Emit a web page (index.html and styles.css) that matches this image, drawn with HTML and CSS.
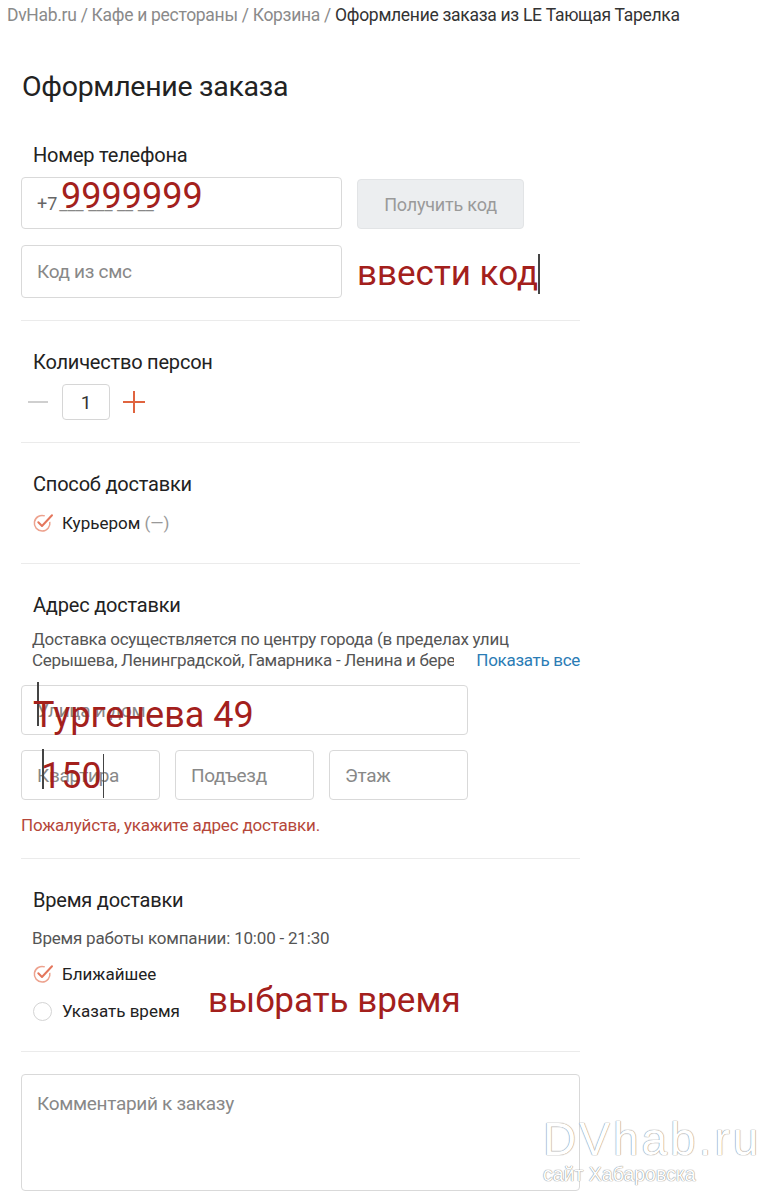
FILE: index.html
```html
<!DOCTYPE html>
<html lang="ru">
<head>
    <meta charset="UTF-8">
    <meta name="viewport" content="width=device-width, initial-scale=1.0">
    <title>Оформление заказа</title>
    <link rel="stylesheet" href="styles.css">
</head>
<body>
    <div class="crumbs">
        <a href="#">DvHab.ru</a> / <a href="#">Кафе и рестораны</a> / <a href="#">Корзина</a> / <span class="current">Оформление заказа из LE Тающая Тарелка</span>
    </div>

    <h1 class="page-title">Оформление заказа</h1>

    <form class="order">
        <!-- Phone -->
        <div class="block">
            <div class="label">Номер телефона</div>
            <div class="row">
                <div class="field phone-field">
                    <span class="prefix">+7</span>
                    <span class="mask">___ ___ __ __</span>
                    <span class="note note-phone">9999999</span>
                </div>
                <button type="button" class="get-code">Получить код</button>
            </div>
            <div class="row">
                <div class="field code-field"><span class="ph">Код из смс</span></div>
                <span class="note note-code">ввести код<i class="caret"></i></span>
            </div>
        </div>

        <!-- Persons -->
        <div class="block">
            <div class="label">Количество персон</div>
            <div class="stepper">
                <span class="minus"></span>
                <span class="count">1</span>
                <span class="plus"></span>
            </div>
        </div>

        <!-- Delivery type -->
        <div class="block block-opts">
            <div class="label label-opt">Способ доставки</div>
            <div class="option">
                <svg class="check" viewBox="0 0 22 22" width="22" height="22">
                    <path d="M17.8 9.8 A7.8 7.8 0 1 1 12.8 3.9" fill="none" stroke="#eda28e" stroke-width="1.5"/>
                    <path d="M6.3 10.3 L10 14 L20 3.3" fill="none" stroke="#e4765c" stroke-width="2" stroke-linecap="round" stroke-linejoin="round"/>
                </svg>
                <span>Курьером <span class="muted">(—)</span></span>
            </div>
        </div>

        <!-- Address -->
        <div class="block">
            <div class="label label-hint">Адрес доставки</div>
            <div class="hint">
                <div class="hint-text">Доставка осуществляется по центру города (в пределах улиц Серышева, Ленинградской, Гамарника - Ленина и берега Амура)</div>
                <a href="#" class="show-all">Показать все</a>
            </div>
            <div class="addr">
                <div class="field street"><span class="ph">Улица и дом</span>
                    <i class="caret caret-street"></i>
                    <span class="note note-street">Тургенева 49</span>
                </div>
                <div class="addr-row">
                    <div class="field"><span class="ph">Квартира</span>
                        <i class="caret caret-flat"></i>
                        <span class="note note-flat">150<i class="caret"></i></span>
                    </div>
                    <div class="field"><span class="ph">Подъезд</span></div>
                    <div class="field"><span class="ph">Этаж</span></div>
                </div>
            </div>
            <div class="error">Пожалуйста, укажите адрес доставки.</div>
        </div>

        <!-- Time -->
        <div class="block block-opts">
            <div class="label label-hint">Время доставки</div>
            <div class="hours">Время работы компании: 10:00 - 21:30</div>
            <div class="time-opts">
                <div class="option">
                    <svg class="check" viewBox="0 0 22 22" width="22" height="22">
                        <path d="M17.8 9.8 A7.8 7.8 0 1 1 12.8 3.9" fill="none" stroke="#eda28e" stroke-width="1.5"/>
                        <path d="M6.3 10.3 L10 14 L20 3.3" fill="none" stroke="#e4765c" stroke-width="2" stroke-linecap="round" stroke-linejoin="round"/>
                    </svg>
                    <span>Ближайшее</span>
                </div>
                <div class="option">
                    <span class="radio"></span>
                    <span>Указать время</span>
                </div>
                <span class="note note-time">выбрать время</span>
            </div>
        </div>

        <div class="comment"><span class="ph">Комментарий к заказу</span></div>
    </form>

    <div class="watermark">
        <div class="wm-big">DVhab.ru</div>
        <div class="wm-small">сайт Хабаровска</div>
    </div>
</body>
</html>
```

FILE: styles.css
```css
body {
    font-family: Roboto, "Liberation Sans", sans-serif;
    background-color: #ffffff;
    color: #222;
    margin: 0;
    padding: 0;
    width: 757px;
    height: 1200px;
    overflow: hidden;
    position: relative;
}
.crumbs {
    padding: 5px 0 0 7px;
    font-size: 17.5px;
    line-height: 20px;
    color: #8a8a8a;
    letter-spacing: -0.3px;
    white-space: nowrap;
}
.crumbs a {
    color: #8a8a8a;
    text-decoration: none;
}
.crumbs .current {
    color: #333;
}
.page-title {
    margin: 45px 0 0 22px;
    font-size: 28.5px;
    line-height: 34px;
    font-weight: 400;
    color: #222;
    letter-spacing: -0.3px;
}
.order {
    margin: 39px 0 0 21px;
    width: 559px;
}
.block {
    border-bottom: 1px solid #ebebeb;
    padding: 29px 0 22px;
}
.block:first-child {
    padding-top: 0;
}
.block-opts {
    padding-bottom: 29px;
}
.label {
    font-size: 20px;
    line-height: 24px;
    color: #222;
    padding-left: 12px;
    margin-bottom: 10px;
    letter-spacing: -0.2px;
}
.label-opt {
    margin-bottom: 16px;
}
.label-hint {
    margin-bottom: 12px;
}
.row {
    display: flex;
    align-items: center;
    gap: 15px;
    margin-bottom: 16px;
}
.row:last-child {
    margin-bottom: 0;
}
.field {
    position: relative;
    box-sizing: border-box;
    height: 52px;
    border: 1px solid #d9d9d9;
    border-radius: 4px;
    display: flex;
    align-items: center;
    padding-left: 15px;
    font-size: 19px;
    color: #888;
}
.phone-field, .code-field {
    width: 321px;
}
.code-field {
    height: 53px;
}
.prefix {
    color: #666;
    font-size: 18px;
}
.mask {
    color: #888;
    margin-left: 2px;
    font-size: 18px;
}
.get-code {
    width: 167px;
    height: 50px;
    margin-top: 2px;
    background-color: #eceef0;
    border: 1px solid #e2e4e6;
    border-radius: 4px;
    color: #9a9a9a;
    font-family: Roboto, "Liberation Sans", sans-serif;
    font-size: 18px;
    letter-spacing: -0.2px;
}
.note {
    color: #a3201c;
    font-family: Roboto, "Liberation Sans", sans-serif;
    white-space: nowrap;
}
.note-phone {
    position: absolute;
    left: 39px;
    top: -3px;
    font-size: 36px;
}
.note-code {
    font-size: 35px;
    display: flex;
    align-items: center;
    margin-top: 4px;
}
.caret {
    display: inline-block;
    width: 1.5px;
    height: 40px;
    background-color: #444;
}
.ph {
    color: #888;
    font-size: 19px;
    letter-spacing: -0.3px;
}
.stepper {
    display: flex;
    align-items: center;
    padding-left: 7px;
}
.minus {
    width: 20px;
    height: 2px;
    background-color: #cfcfcf;
}
.count {
    box-sizing: border-box;
    width: 48px;
    height: 36px;
    margin-left: 14px;
    border: 1px solid #d6d6d6;
    border-radius: 4px;
    display: flex;
    align-items: center;
    justify-content: center;
    font-size: 19px;
    color: #333;
}
.plus {
    position: relative;
    width: 22px;
    height: 22px;
    margin-left: 13px;
}
.plus::before, .plus::after {
    content: "";
    position: absolute;
    background-color: #e0643f;
}
.plus::before {
    left: 0;
    top: 10px;
    width: 22px;
    height: 2px;
}
.plus::after {
    left: 10px;
    top: 0;
    width: 2px;
    height: 22px;
}
.option {
    display: flex;
    align-items: center;
    gap: 8px;
    height: 22px;
    padding-left: 11px;
    font-size: 17px;
    color: #222;
}
.muted {
    color: #999;
}
.radio {
    box-sizing: border-box;
    width: 19px;
    height: 19px;
    margin: 0 2px 0 1px;
    border: 1px solid #d4d4d4;
    border-radius: 50%;
}
.hint {
    position: relative;
    padding-left: 11px;
    font-size: 17px;
    line-height: 21px;
}
.hint-text {
    height: 42px;
    overflow: hidden;
    color: #555;
    letter-spacing: -0.3px;
}
.show-all {
    position: absolute;
    right: 0;
    bottom: 0;
    padding-left: 22px;
    background-color: #fff;
    color: #2b7cb5;
    text-decoration: none;
    white-space: nowrap;
    letter-spacing: -0.3px;
}
.addr {
    width: 447px;
    margin-top: 14px;
    display: flex;
    flex-direction: column;
    gap: 15px;
}
.street {
    height: 50px;
}
.addr-row {
    display: grid;
    grid-template-columns: repeat(3, 1fr);
    gap: 15px;
}
.addr-row .field {
    height: 50px;
}
.caret-street {
    position: absolute;
    left: 15px;
    top: -4px;
    height: 44px;
}
.note-street {
    position: absolute;
    left: 11px;
    top: 8px;
    font-size: 36px;
}
.caret-flat {
    position: absolute;
    left: 20px;
    top: -2px;
    height: 40px;
}
.note-flat {
    position: absolute;
    left: 19px;
    top: 3px;
    font-size: 36px;
    display: flex;
    align-items: center;
}
.note-flat .caret {
    height: 44px;
    margin-left: 1px;
}
.error {
    margin-top: 16px;
    font-size: 17px;
    line-height: 18px;
    color: #b5473a;
    letter-spacing: -0.2px;
    padding-bottom: 2px;
}
.hours {
    padding-left: 11px;
    font-size: 17px;
    line-height: 20px;
    color: #555;
    margin-top: 16px;
    margin-bottom: 15px;
    letter-spacing: -0.2px;
}
.time-opts {
    position: relative;
    display: flex;
    flex-direction: column;
    gap: 15px;
}
.note-time {
    position: absolute;
    left: 187px;
    top: 17px;
    font-size: 35px;
}
.comment {
    box-sizing: border-box;
    margin-top: 22px;
    height: 117px;
    border: 1px solid #d9d9d9;
    border-radius: 4px;
    padding: 17px 0 0 15px;
}
.watermark {
    position: absolute;
    left: 543px;
    top: 1115px;
    color: #fff;
    text-shadow: 0 0 1px #888, 0 0 1px #888;
    font-family: "Liberation Sans", sans-serif;
    font-weight: 100;
}
.wm-big {
    font-size: 46px;
    line-height: 48px;
    letter-spacing: 3px;
}
.wm-small {
    font-size: 19.5px;
    line-height: 22px;
}
```
